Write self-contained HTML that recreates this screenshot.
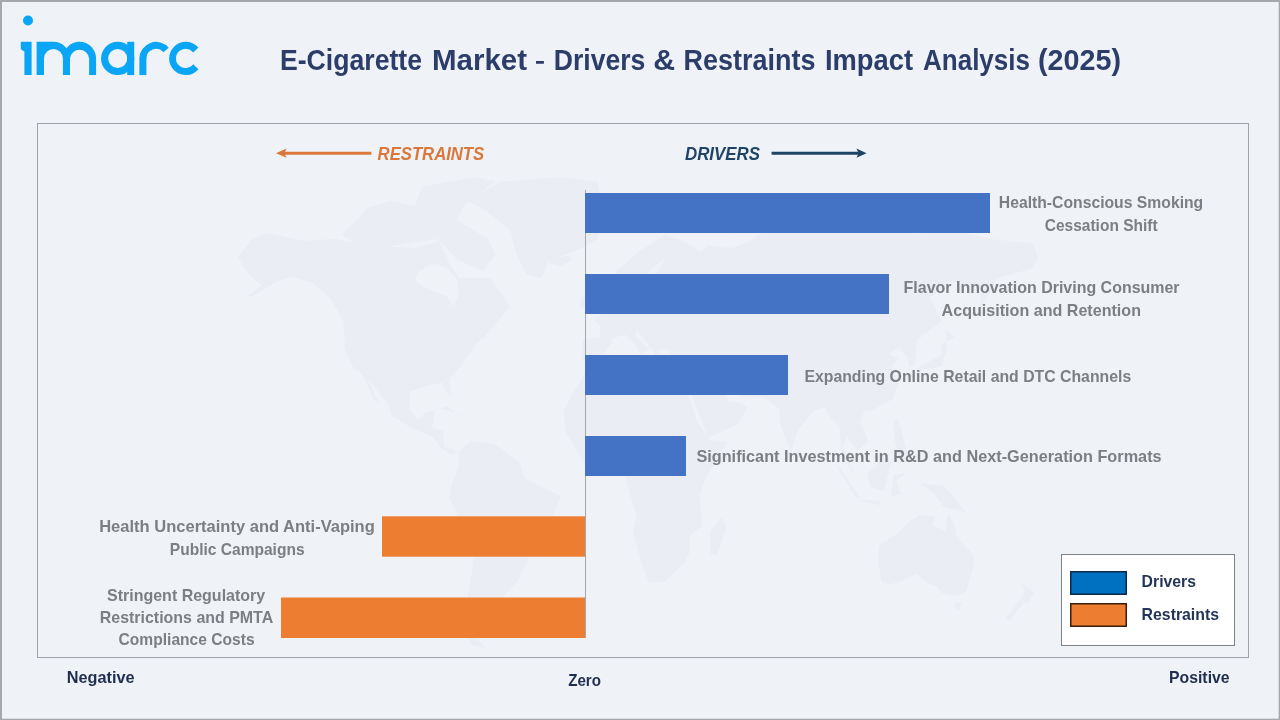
<!DOCTYPE html>
<html><head><meta charset="utf-8">
<style>
html,body{margin:0;padding:0;width:1280px;height:720px;overflow:hidden;background:#EFF2F7;}
svg{display:block;will-change:transform;}
text{font-family:"Liberation Sans",sans-serif;font-weight:bold;}
</style></head>
<body>
<svg width="1280" height="720" viewBox="0 0 1280 720">
<rect x="0" y="0" width="1280" height="720" fill="#EFF2F7"/>
<g fill="#A7A8AB"><rect x="0" y="0" width="1280" height="2"/><rect x="0" y="0" width="2" height="720"/><rect x="1278.7" y="0" width="1.3" height="720"/><rect x="0" y="718.7" width="1280" height="1.3"/></g>
<g fill="#0AA6F5">
<circle cx="28" cy="20.5" r="5"/>
<path d="M20.8,41.8 H31.6 V75.1 H24.4 V51.5 L20.8,49.2 Z"/>
<path d="M36.6,75.1 V41.8 H53.4 A16.6,16.6 0 0 1 70,58.45 V75.1 H62.9 V58.45 A9.4,9.4 0 0 0 44,58.45 V75.1 Z"/>
<path d="M62.9,58.45 A16.6,16.6 0 0 1 96.1,58.45 V75.1 H89.1 V58.45 A9.6,9.6 0 0 0 70,58.45 V75.1 Z"/>
<rect x="127.2" y="41.8" width="7" height="33.3"/>
<circle cx="117.7" cy="58.45" r="13.1" fill="none" stroke="#0AA6F5" stroke-width="7.1"/>
<rect x="139.4" y="58" width="7" height="17.1"/>
<path d="M139.4,58.45 A16.6,16.6 0 0 1 168.7,47.8 L163.3,52.3 A9.6,9.6 0 0 0 146.4,58.45 Z"/>
<path d="M198.4,47.6 A16.65,16.65 0 1 0 198.4,69.3 L193.2,64.3 A9.6,9.6 0 1 1 193.2,52.6 Z"/>
</g>
<rect x="37.5" y="123.5" width="1211" height="534" fill="#EFF2F7" stroke="#A0A4AA" stroke-width="1"/>
<g fill="#EAEEF4"><path d="M237.8,256.8 L252.3,239.0 L266.9,233.1 L303.4,240.7 L335.0,239.0 L366.5,245.6 L415.1,247.9 L439.4,241.2 L446.7,256.8 L451.6,267.3 L458.9,278.1 L490.5,278.1 L509.9,306.8 L485.6,335.4 L475.9,343.8 L461.3,365.7 L449.2,379.2 L451.6,397.7 L445.5,391.0 L441.9,382.5 L427.3,385.9 L410.3,391.0 L409.1,408.8 L417.6,419.9 L426.1,412.0 L434.6,410.4 L432.2,427.8 L443.1,431.0 L444.3,446.8 L457.7,451.6 L451.6,454.7 L439.4,446.8 L433.4,437.3 L422.4,432.6 L412.7,428.8 L390.9,415.2 L389.1,405.7 L373.8,385.9 L367.8,379.2 L379.9,405.7 L373.8,399.3 L366.5,382.5 L361.7,374.1 L352.0,365.7 L344.7,348.8 L343.5,321.2 L330.1,297.9 L313.1,283.5 L291.2,276.3 L276.6,281.7 L264.5,288.9 L252.3,296.1 L245.0,297.9 L262.1,285.3 L252.3,278.1 L245.0,269.1Z"/><path d="M342.2,234.5 L359.3,217.7 L366.5,208.1 L390.9,201.0 L415.1,205.8 L422.4,186.6 L475.9,177.0 L495.3,181.8 L463.8,205.8 L456.5,220.1 L488.0,239.0 L495.3,254.5 L483.2,270.9 L458.9,260.6 L437.0,239.0 L407.9,243.4 L378.7,247.9 L354.4,243.4Z"/><path d="M468.6,201.0 L500.2,181.8 L561.0,177.0 L597.4,181.8 L602.3,205.8 L597.4,239.0 L582.8,247.9 L548.8,260.6 L541.5,278.1 L526.9,274.5 L517.2,256.8 L509.9,229.7 L485.6,210.5Z"/><path d="M458.9,451.6 L471.0,440.5 L495.3,444.6 L519.6,462.4 L524.5,478.0 L539.1,486.1 L561.0,495.9 L551.2,519.9 L546.4,545.7 L529.4,557.2 L517.2,581.6 L505.1,594.6 L495.3,602.5 L488.0,615.5 L480.8,631.8 L478.3,639.9 L485.6,648.0 L471.0,644.8 L463.8,625.2 L467.4,599.2 L472.3,569.4 L474.7,534.2 L461.3,522.7 L449.2,497.5 L451.6,484.5 L458.9,465.6Z"/><path d="M439.4,408.8 L466.2,415.2 L458.9,415.2 L446.7,405.7Z"/><path d="M546.6,259.0 L570.7,255.4 L571.9,260.6 L559.8,265.9 L551.4,263.9Z"/><path d="M563.4,412.0 L565.8,432.6 L585.1,464.0 L616.4,464.0 L627.3,468.7 L626.1,481.2 L636.9,517.0 L632.8,531.3 L640.5,560.3 L649.0,583.1 L664.6,581.6 L683.9,563.3 L690.0,551.4 L688.8,537.1 L702.0,525.6 L699.6,494.2 L705.6,478.0 L727.3,442.1 L709.2,440.5 L697.2,421.5 L686.3,389.3 L682.2,378.5 L664.6,375.8 L652.6,379.2 L641.8,374.1 L628.5,358.9 L599.6,364.0 L589.9,362.3 L580.3,382.5 L573.1,392.6Z"/><path d="M710.4,554.3 L717.7,554.3 L726.1,527.0 L722.5,517.0 L710.4,531.3Z"/><path d="M581.5,358.9 L582.7,338.7 L599.6,337.1 L600.8,326.6 L593.6,319.4 L609.2,310.4 L616.4,303.2 L624.9,288.9 L629.7,296.1 L633.3,298.6 L655.0,296.1 L656.2,287.1 L662.2,278.1 L656.2,274.5 L664.6,259.0 L652.6,267.3 L645.4,278.1 L645.4,288.9 L634.5,292.5 L629.7,281.7 L616.4,283.5 L616.4,270.9 L638.1,252.3 L664.6,234.5 L683.9,241.2 L700.8,252.3 L708.0,245.6 L732.1,247.9 L749.0,241.2 L770.7,227.3 L797.2,222.5 L816.5,212.9 L855.0,203.4 L876.7,222.5 L917.7,234.5 L944.2,227.3 L990.0,239.0 L1033.4,243.4 L1038.2,259.0 L1031.0,269.1 L997.2,278.1 L980.4,310.4 L980.4,287.1 L949.0,281.7 L929.8,297.9 L941.8,321.2 L916.5,340.4 L915.3,364.0 L909.3,367.4 L908.1,357.3 L898.4,347.2 L888.8,353.9 L898.4,358.9 L891.2,365.7 L898.4,382.5 L892.4,399.3 L871.9,410.4 L864.7,410.4 L859.9,421.5 L868.3,440.5 L857.5,450.9 L846.6,435.8 L843.0,446.8 L853.8,474.0 L841.8,453.1 L839.4,426.2 L830.9,418.3 L824.9,407.2 L814.1,410.4 L797.2,431.0 L791.2,453.1 L780.3,424.7 L779.1,408.8 L764.7,397.7 L741.8,396.7 L739.4,392.6 L724.9,382.5 L720.1,384.2 L728.5,400.9 L740.6,402.5 L747.8,407.2 L737.0,424.7 L708.0,438.0 L698.4,412.0 L688.8,389.3 L682.7,382.5 L688.8,362.3 L691.2,359.6 L669.5,360.6 L668.3,348.8 L659.8,348.8 L658.6,358.9 L652.6,350.5 L636.9,330.2 L634.5,335.4 L649.0,348.8 L641.8,355.6 L633.3,342.1 L624.9,334.4 L611.6,338.7 L612.1,342.4 L604.4,352.2 L599.6,360.0 L590.9,362.3Z"/><path d="M591.1,314.0 L608.0,310.4 L608.5,304.3 L599.6,293.2 L599.6,286.3 L592.4,283.1 L589.9,290.7 L597.2,297.9 L593.6,306.8Z"/><path d="M580.3,308.3 L589.9,306.8 L589.9,296.1 L583.9,296.1 L580.3,301.4Z"/><path d="M917.7,379.2 L922.5,369.1 L932.2,369.1 L941.8,365.7 L946.6,350.5 L945.4,330.2 L955.1,337.1 L941.8,343.8 L940.6,355.6 L933.4,358.9 L924.9,364.0 L917.7,369.1Z"/><path d="M834.6,460.9 L859.9,497.5 L856.2,497.5 L840.6,473.3Z"/><path d="M867.1,473.3 L886.4,456.2 L891.2,462.4 L884.0,491.0 L870.7,487.8Z"/><path d="M857.5,500.1 L881.5,505.6 L879.1,500.8Z"/><path d="M920.1,482.9 L944.2,486.1 L965.9,512.1 L944.2,507.2 L934.6,494.2Z"/><path d="M893.6,419.9 L898.4,419.9 L908.1,456.2 L898.4,456.2 L893.6,434.2Z"/><path d="M891.2,495.9 L893.6,474.9 L905.6,473.3 L896.0,481.2 L900.8,494.2Z"/><path d="M879.1,545.7 L877.9,557.2 L881.5,581.6 L888.8,584.6 L902.0,581.6 L915.3,574.0 L929.8,584.6 L937.0,586.0 L941.8,593.1 L956.3,596.0 L965.9,591.7 L974.3,563.3 L973.1,554.3 L956.3,537.1 L955.1,525.6 L947.8,512.8 L945.4,531.3 L932.2,525.6 L934.6,517.0 L920.1,514.7 L908.1,522.7 L898.4,532.8Z"/><path d="M1020.6,583.1 L1034.6,592.3 L1027.4,604.1 L1023.7,602.5 L1009.3,620.4 L1005.7,618.8 L1018.9,600.9 L1024.9,590.3Z"/><path d="M729.7,234.5 L741.8,215.3 L768.3,208.1 L737.0,229.7Z"/><path d="M797.2,447.5 L802.0,454.7 L799.6,459.3 L796.7,456.2Z"/><path d="M953.9,601.9 L961.8,602.5 L958.7,611.0 L955.1,607.4Z"/></g><g fill="#EFF2F7"><path d="M415.1,278.1 L417.6,283.5 L432.2,290.7 L446.7,296.1 L454.0,306.8 L458.9,292.5 L456.5,278.1 L446.7,268.0 L437.0,263.9 L427.3,265.5 L417.6,272.7Z"/></g>
<line x1="283" y1="153.2" x2="371.4" y2="153.2" stroke="#D9783A" stroke-width="2.9"/>
<path d="M276,153.2 L286.5,148.6 L284.5,153.2 L286.5,157.8 Z" fill="#D9783A"/>
<line x1="771.6" y1="153.2" x2="860" y2="153.2" stroke="#1F4466" stroke-width="2.9"/>
<path d="M866.6,153.2 L856.5,148.6 L858.5,153.2 L856.5,157.8 Z" fill="#1F4466"/>
<line x1="585.5" y1="190" x2="585.5" y2="638" stroke="#A3A7AC" stroke-width="1"/>
<rect x="585" y="193" width="405" height="40" fill="#4472C4"/>
<rect x="585" y="274" width="304" height="40" fill="#4472C4"/>
<rect x="585" y="355" width="203" height="40" fill="#4472C4"/>
<rect x="585" y="436" width="101" height="40" fill="#4472C4"/>
<rect x="382" y="516.3" width="203" height="40.4" fill="#ED7D31"/>
<rect x="281" y="597.5" width="304" height="40.5" fill="#ED7D31"/>
<rect x="1061.5" y="554.5" width="173" height="91" fill="#FFFFFF" stroke="#7E8186" stroke-width="1"/>
<rect x="1070.75" y="571.75" width="55.5" height="22.5" fill="#0070C0" stroke="#0B2A45" stroke-width="1.5"/>
<rect x="1070.75" y="603.75" width="55.5" height="22.5" fill="#ED7D31" stroke="#3A1D0A" stroke-width="1.5"/>
<rect x="536" y="61" width="7.9" height="2.75" fill="#2C3D6A"/>
<text x="280.00" y="70" font-size="29" fill="#2C3D6A" textLength="142.00" lengthAdjust="spacingAndGlyphs">E-Cigarette</text>
<text x="431.99" y="70" font-size="29" fill="#2C3D6A" textLength="95.02" lengthAdjust="spacingAndGlyphs">Market</text>
<text x="553.79" y="70" font-size="29" fill="#2C3D6A" textLength="91.62" lengthAdjust="spacingAndGlyphs">Drivers</text>
<text x="653.18" y="70" font-size="29" fill="#2C3D6A" textLength="21.86" lengthAdjust="spacingAndGlyphs">&amp;</text>
<text x="683.59" y="70" font-size="29" fill="#2C3D6A" textLength="131.82" lengthAdjust="spacingAndGlyphs">Restraints</text>
<text x="824.99" y="70" font-size="29" fill="#2C3D6A" textLength="88.02" lengthAdjust="spacingAndGlyphs">Impact</text>
<text x="923.00" y="70" font-size="29" fill="#2C3D6A" textLength="107.00" lengthAdjust="spacingAndGlyphs">Analysis</text>
<text x="1037.99" y="70" font-size="29" fill="#2C3D6A" textLength="83.03" lengthAdjust="spacingAndGlyphs">(2025)</text>
<text x="377.60" y="160" font-size="18.3" font-style="italic" fill="#D9783A" textLength="106.61" lengthAdjust="spacingAndGlyphs">RESTRAINTS</text>
<text x="684.99" y="160" font-size="18.3" font-style="italic" fill="#1F4466" textLength="75.01" lengthAdjust="spacingAndGlyphs">DRIVERS</text>
<text x="998.80" y="208" font-size="17" fill="#7B7E82" textLength="204.41" lengthAdjust="spacingAndGlyphs">Health-Conscious Smoking</text>
<text x="1044.80" y="230.6" font-size="17" fill="#7B7E82" textLength="112.80" lengthAdjust="spacingAndGlyphs">Cessation Shift</text>
<text x="903.60" y="292.7" font-size="17" fill="#7B7E82" textLength="276.00" lengthAdjust="spacingAndGlyphs">Flavor Innovation Driving Consumer</text>
<text x="941.60" y="315.7" font-size="17" fill="#7B7E82" textLength="199.40" lengthAdjust="spacingAndGlyphs">Acquisition and Retention</text>
<text x="804.40" y="382" font-size="17" fill="#7B7E82" textLength="326.80" lengthAdjust="spacingAndGlyphs">Expanding Online Retail and DTC Channels</text>
<text x="696.40" y="461.7" font-size="17" fill="#7B7E82" textLength="465.20" lengthAdjust="spacingAndGlyphs">Significant Investment in R&amp;D and Next-Generation Formats</text>
<text x="99.20" y="532.3" font-size="17" fill="#7B7E82" textLength="275.60" lengthAdjust="spacingAndGlyphs">Health Uncertainty and Anti-Vaping</text>
<text x="169.80" y="554.5" font-size="17" fill="#7B7E82" textLength="134.80" lengthAdjust="spacingAndGlyphs">Public Campaigns</text>
<text x="107.00" y="601.1" font-size="17" fill="#7B7E82" textLength="158.20" lengthAdjust="spacingAndGlyphs">Stringent Regulatory</text>
<text x="99.80" y="623.4" font-size="17" fill="#7B7E82" textLength="173.40" lengthAdjust="spacingAndGlyphs">Restrictions and PMTA</text>
<text x="118.60" y="645.3" font-size="17" fill="#7B7E82" textLength="136.00" lengthAdjust="spacingAndGlyphs">Compliance Costs</text>
<text x="66.79" y="682.8" font-size="17.3" fill="#1F2D4F" textLength="67.82" lengthAdjust="spacingAndGlyphs">Negative</text>
<text x="568.20" y="685.8" font-size="17.3" fill="#1F2D4F" textLength="32.81" lengthAdjust="spacingAndGlyphs">Zero</text>
<text x="1169.00" y="682.8" font-size="17.3" fill="#1F2D4F" textLength="60.61" lengthAdjust="spacingAndGlyphs">Positive</text>
<text x="1141.60" y="587" font-size="16.4" fill="#243556" textLength="54.41" lengthAdjust="spacingAndGlyphs">Drivers</text>
<text x="1141.60" y="619.8" font-size="16.4" fill="#243556" textLength="77.41" lengthAdjust="spacingAndGlyphs">Restraints</text>
</svg>
</body></html>
